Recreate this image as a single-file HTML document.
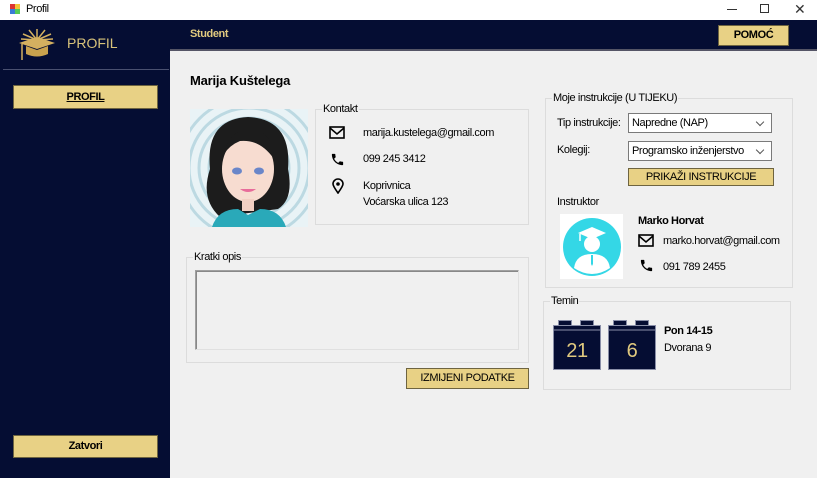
<!DOCTYPE html>
<html><head><meta charset="utf-8"><style>
*{margin:0;padding:0;box-sizing:border-box}
body{width:817px;height:478px;overflow:hidden;background:#f0f0f0;font-family:"Liberation Sans",sans-serif;font-size:11px;letter-spacing:-0.4px;color:#000;position:relative}
.a{position:absolute}
.btn{position:absolute;background:#e8d185;border:1px solid #6e6440;text-align:center;font-size:11px}
.grp{position:absolute;border:1px solid #dcdcdc}
.lg{position:absolute;top:-7px;left:6px;background:#f0f0f0;padding:0 1px;font-size:11px}
.cb{position:absolute;background:#fff;border:1px solid #7a7a7a;font-size:11px;padding:3px 3px}
.cb:after{content:"";position:absolute;right:8px;top:5px;width:5px;height:5px;border-right:1px solid #555;border-bottom:1px solid #555;transform:rotate(45deg)}
</style></head><body>
<div class="a" style="left:0;top:0;width:817px;height:20px;background:#fff"></div>
<div class="a" style="left:10px;top:4px;width:5px;height:5px;background:#d33"></div>
<div class="a" style="left:15px;top:4px;width:5px;height:5px;background:#f3c43a"></div>
<div class="a" style="left:10px;top:9px;width:5px;height:5px;background:#3a7bd5"></div>
<div class="a" style="left:15px;top:9px;width:5px;height:5px;background:#5c5"></div>
<div class="a" style="left:26px;top:3px;font-size:11px">Profil</div>
<div class="a" style="left:727px;top:9px;width:10px;height:1px;background:#333"></div>
<div class="a" style="left:760px;top:4px;width:9px;height:9px;border:1px solid #333"></div>
<div class="a" style="left:794px;top:1px;font-size:14px;color:#333">✕</div>
<div class="a" style="left:0;top:20px;width:170px;height:458px;background:#050d33"></div>
<div class="a" style="left:3px;top:21px;width:166px;height:49px;border-bottom:1px solid #4a5070"></div>
<svg class="a" style="left:16px;top:26px" width="42" height="40" viewBox="0 0 42 40">
<g stroke="#d4b060" stroke-width="1.5" fill="none"><path d="M21 14V3M21 14L13 4M21 14L29 4M21 14L7 8M21 14L35 8M21 14L5 13M21 14L37 13"/></g>
<path d="M3 17L21 11L39 17L21 23Z" fill="#d4b060"/><path d="M10 20V28Q21 33 32 28V20L21 24Z" fill="#c9a24e"/><path d="M6 18V34" stroke="#d4b060" stroke-width="1.5"/></svg>
<div class="a" style="left:67px;top:35px;color:#d8c27a;font-size:14px;letter-spacing:0">PROFIL</div>
<div class="btn" style="left:13px;top:85px;width:145px;height:24px;line-height:22px;font-weight:bold;text-decoration:underline">PROFIL</div>
<div class="btn" style="left:13px;top:435px;width:145px;height:23px;line-height:21px;font-weight:bold">Zatvori</div>
<div class="a" style="left:170px;top:20px;width:647px;height:31px;background:#050d33;border-bottom:2px solid #556"></div>
<div class="a" style="left:190px;top:28px;color:#e0c97f;font-weight:bold;font-size:11px">Student</div>
<div class="btn" style="left:718px;top:25px;width:71px;height:21px;line-height:19px;font-weight:bold">POMOĆ</div>
<div class="a" style="left:190px;top:73px;font-weight:bold;font-size:13px;letter-spacing:-0.2px">Marija Kuštelega</div>
<svg class="a" style="left:190px;top:109px" width="118" height="118" viewBox="0 0 118 118">
<rect width="118" height="118" fill="#e9f3f6"/>
<g fill="none" stroke="#bcd9e2" stroke-width="3"><circle cx="59" cy="59" r="20"/><circle cx="59" cy="59" r="30"/><circle cx="59" cy="59" r="40"/><circle cx="59" cy="59" r="50"/><circle cx="59" cy="59" r="60"/><circle cx="59" cy="59" r="70"/></g>
<path d="M20 60Q15 10 58 8Q102 10 98 60Q104 90 88 100L30 108Q10 90 20 60Z" fill="#1c1c1c"/>
<ellipse cx="58" cy="60" rx="26" ry="33" fill="#f7dcd0"/>
<path d="M34 45Q40 15 70 22Q84 30 84 50Q70 30 50 32Q40 36 34 45Z" fill="#1c1c1c"/>
<ellipse cx="47" cy="62" rx="5" ry="3.5" fill="#6a86c9"/><ellipse cx="69" cy="62" rx="5" ry="3.5" fill="#6a86c9"/>
<path d="M50 80Q58 86 66 80Z" fill="#e86c9a"/>
<rect x="52" y="90" width="12" height="12" fill="#f2cfc2"/>
<path d="M22 118Q28 100 48 100L58 106L70 100Q90 100 96 118Z" fill="#2aa9b9"/>
</svg>
<div class="grp" style="left:315px;top:109px;width:214px;height:116px"><span class="lg">Kontakt</span></div>
<svg class="a" style="left:329px;top:126px" width="16" height="13" viewBox="0 0 16 13"><rect x="1" y="1" width="14" height="11" fill="none" stroke="#000" stroke-width="1.6"/><path d="M1 2L8 8L15 2" fill="none" stroke="#000" stroke-width="1.6"/></svg>
<div class="a" style="left:363px;top:127px">marija.kustelega@gmail.com</div>
<svg class="a" style="left:330px;top:152px" width="15" height="15" viewBox="0 0 24 24"><path d="M6.6 10.8a15 15 0 006.6 6.6l2.2-2.2c.3-.3.7-.4 1-.2 1.1.4 2.300.6 3.600.6.6 0 1 .4 1 1V20c0 .6-.4 1-1 1C10.6 21 3 13.4 3 4c0-.6.4-1 1-1h3.5c.6 0 1 .4 1 1 0 1.3.2 2.5.6 3.6.1.3 0 .7-.2 1z" fill="#000"/></svg>
<div class="a" style="left:363px;top:153px">099 245 3412</div>
<svg class="a" style="left:332px;top:178px" width="12" height="16" viewBox="0 0 12 16"><path d="M6 15Q1 8 1 6A5 5 0 0111 6Q11 8 6 15Z" fill="none" stroke="#000" stroke-width="1.6"/><circle cx="6" cy="6" r="1.8" fill="#000"/></svg>
<div class="a" style="left:363px;top:180px">Koprivnica</div>
<div class="a" style="left:363px;top:196px">Voćarska ulica 123</div>
<div class="grp" style="left:186px;top:257px;width:343px;height:106px"><span class="lg">Kratki opis</span></div>
<div class="a" style="left:195px;top:270px;width:324px;height:80px;border:1px solid #a0a0a0;border-right-color:#e0e0e0;border-bottom-color:#e0e0e0;box-shadow:inset 1px 1px 0 #888"></div>
<div class="btn" style="left:406px;top:368px;width:123px;height:21px;line-height:19px">IZMIJENI PODATKE</div>
<div class="grp" style="left:545px;top:98px;width:248px;height:190px"><span class="lg">Moje instrukcije (U TIJEKU)</span></div>
<div class="a" style="left:557px;top:117px">Tip instrukcije:</div>
<div class="cb" style="left:628px;top:113px;width:144px;height:20px">Napredne (NAP)</div>
<div class="a" style="left:557px;top:144px">Kolegij:</div>
<div class="cb" style="left:628px;top:141px;width:144px;height:20px">Programsko inženjerstvo</div>
<div class="btn" style="left:628px;top:168px;width:146px;height:18px;line-height:16px">PRIKAŽI INSTRUKCIJE</div>
<div class="a" style="left:557px;top:196px">Instruktor</div>
<svg class="a" style="left:560px;top:214px" width="63" height="65" viewBox="0 0 63 65"><rect width="63" height="65" fill="#fff"/><circle cx="32" cy="33" r="29" fill="#34d7e6"/><path d="M32 13L46 19L32 25L18 19Z" fill="#fff"/><path d="M20 20V27" stroke="#fff" stroke-width="1.5"/><circle cx="32" cy="30" r="8" fill="#fff"/><path d="M14 54Q16 40 32 40Q48 40 50 54Q41 60 32 60Q23 60 14 54Z" fill="#fff"/><path d="M31 41H33L33 50L32 52L31 50Z" fill="#34d7e6"/></svg>
<div class="a" style="left:638px;top:215px;font-weight:bold">Marko Horvat</div>
<svg class="a" style="left:638px;top:234px" width="16" height="13" viewBox="0 0 16 13"><rect x="1" y="1" width="14" height="11" fill="none" stroke="#000" stroke-width="1.6"/><path d="M1 2L8 8L15 2" fill="none" stroke="#000" stroke-width="1.6"/></svg>
<div class="a" style="left:663px;top:235px">marko.horvat@gmail.com</div>
<svg class="a" style="left:639px;top:258px" width="15" height="15" viewBox="0 0 24 24"><path d="M6.6 10.8a15 15 0 006.6 6.6l2.2-2.2c.3-.3.7-.4 1-.2 1.1.4 2.3.6 3.6.6.6 0 1 .4 1 1V20c0 .6-.4 1-1 1C10.6 21 3 13.4 3 4c0-.6.4-1 1-1h3.5c.6 0 1 .4 1 1 0 1.3.2 2.5.6 3.6.1.3 0 .7-.2 1z" fill="#000"/></svg>
<div class="a" style="left:663px;top:261px">091 789 2455</div>
<div class="grp" style="left:543px;top:301px;width:248px;height:89px"><span class="lg">Temin</span></div>
<svg class="a" style="left:553px;top:320px" width="104" height="50" viewBox="0 0 104 50">
<g fill="#050d33" stroke="#8a8fa8" stroke-width="1"><rect x="5.5" y="0.5" width="13" height="5"/><rect x="27.5" y="0.5" width="13" height="5"/><rect x="0.5" y="5.5" width="47" height="44"/>
<rect x="60.5" y="0.5" width="13" height="5"/><rect x="82.5" y="0.5" width="13" height="5"/><rect x="55.5" y="5.5" width="47" height="44"/></g>
<line x1="0" y1="10" x2="48" y2="10" stroke="#8a8fa8"/><line x1="55" y1="10" x2="103" y2="10" stroke="#8a8fa8"/>
<text x="24" y="37" fill="#e0c97f" font-family="Liberation Sans" font-size="20" text-anchor="middle">21</text>
<text x="79" y="37" fill="#e0c97f" font-family="Liberation Sans" font-size="20" text-anchor="middle">6</text></svg>
<div class="a" style="left:664px;top:325px;font-weight:bold">Pon 14-15</div>
<div class="a" style="left:664px;top:342px">Dvorana 9</div>
</body></html>
